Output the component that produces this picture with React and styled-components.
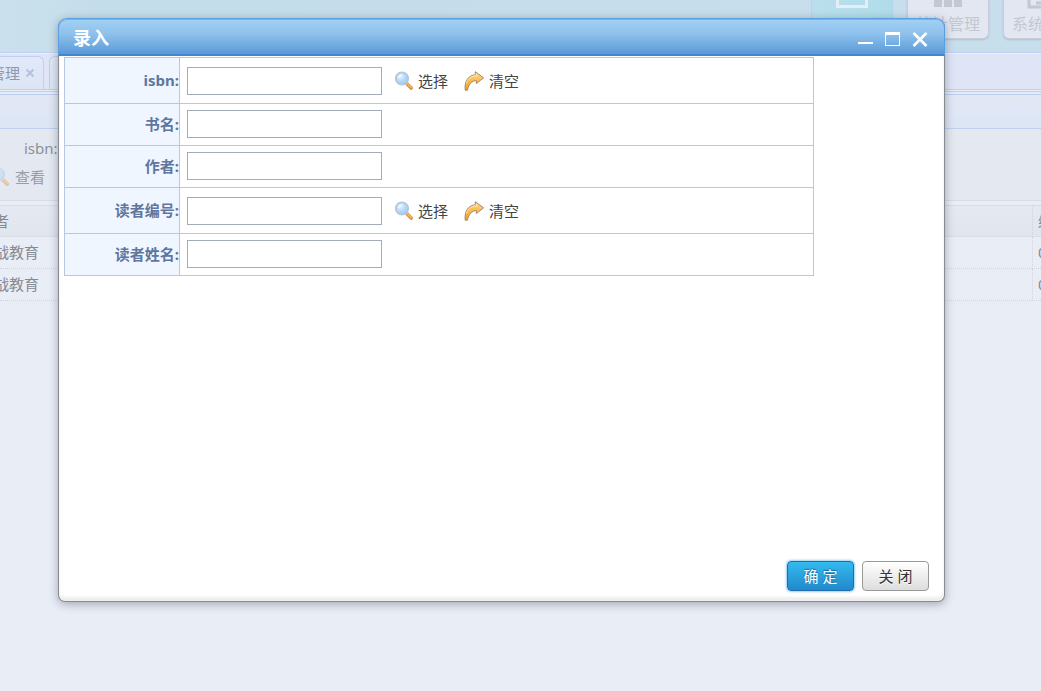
import React from 'react';
import styled, { createGlobalStyle } from 'styled-components';

const GlobalStyle = createGlobalStyle`
  * {
    box-sizing: border-box;
  }

  body {
    margin: 0;
    overflow: hidden;
    background: #e9edf6;
    color: #444;
    font-family: "Noto Sans", "Noto Sans CJK SC", sans-serif;
    font-size: 15px;
    line-height: 20px;
  }
`;

const Page = styled.div`
  position: relative;
  min-height: 100vh;
  overflow: hidden;
`;

const Header = styled.header`
  display: flex;
  justify-content: flex-end;
  gap: 14px;
  height: 52px;
  margin-right: -44px;
  background: linear-gradient(90deg, #cbe0ed, #c4ddea 10%, #c8deec);
`;

const NavTile = styled.a`
  display: flex;
  flex-direction: column;
  align-items: center;
  width: 82px;
  height: ${({ $active }) => ($active ? '52px' : '39px')};
  border: 1px solid ${({ $active }) => ($active ? '#b0d8e6' : '#c8cdd9')};
  border-top: 0;
  border-radius: ${({ $active }) => ($active ? '0' : '0 0 6px 6px')};
  background: ${({ $active }) => ($active ? 'linear-gradient(90deg, #b9dfec, #b0dcea)' : '#e2e7f1')};
  box-shadow: ${({ $active }) => ($active ? 'none' : '0 1px 2px #aebfce')};
  color: #c2c7d1;
  font-size: 16px;
  text-decoration: none;
  white-space: nowrap;

  svg {
    flex: none;
    margin-bottom: 5px;
  }
`;

const TabBar = styled.nav`
  display: flex;
  align-items: flex-end;
  gap: 5px;
  height: 38px;
  border-top: 1px solid #bfd0f0;
  border-bottom: 1px solid #c3cfe6;
  background: #dfe5f7;
  box-shadow: inset 0 1px #ebeffa;
`;

const Tab = styled.a`
  display: flex;
  align-items: center;
  gap: 5px;
  height: 33px;
  margin-left: ${({ $clipped }) => ($clipped ? '-51px' : '0')};
  padding: 0 8px 0 10px;
  border: 1px solid #bfd0f0;
  border-bottom: 0;
  border-radius: 6px 6px 0 0;
  background: linear-gradient(#e2e8f7, #dbe6f5);
  color: #8e99ad;
  text-decoration: none;
`;

const PanelTitle = styled.div`
  height: 35px;
  margin-top: 4px;
  border-top: 1px solid #b9cdf0;
  border-bottom: 1px solid #bfd0f0;
  background: linear-gradient(#e3e7f4, #dce6f6);
  box-shadow: 0 -2px #e6ecf6, 0 -3px #c3cfe6;
`;

const Search = styled.form`
  height: 72px;
  padding: 9px 0 0 24px;
  border-bottom: 1px solid #d7dce5;
  background: #e4e8f1;
  color: #8c919a;
`;

const SearchRow = styled.div`
  display: flex;
  align-items: center;
  gap: 8px;
  height: 20px;
`;

const SearchInput = styled.input`
  width: 150px;
  height: 20px;
  border: 1px solid #c5cad3;
`;

const ViewButton = styled.button`
  display: flex;
  align-items: center;
  gap: 5px;
  height: 20px;
  margin: 9px 0 0 -34px;
  padding: 0;
  border: 0;
  background: none;
  color: #989da6;
  font: inherit;

  svg {
    opacity: 0.45;
  }
`;

const Grid = styled.table`
  width: 100%;
  margin-top: 4px;
  border-collapse: separate;
  border-spacing: 0;
  table-layout: fixed;
  color: #858a93;

  th,
  td {
    height: 32px;
    padding: 0 0 2px;
    border-bottom: 1px dotted #cfd4dd;
    font-weight: normal;
    text-align: left;
    white-space: nowrap;
    overflow: hidden;
  }

  th {
    padding-bottom: 0;
    border-top: 1px solid #d7dce5;
    border-bottom: 1px solid #d7dce5;
    background: linear-gradient(#e5e9f2, #e1e5ee);
  }

  th:last-child,
  td:last-child {
    width: 9px;
    padding-left: 5px;
    border-left: 1px dotted #cfd4dd;
  }
`;

const Clipped = styled.span`
  display: block;
  margin-left: -21px;
`;

const Overlay = styled.div`
  position: absolute;
  inset: 0;
  padding: 18px 96px 89px 58px;
`;

const Dialog = styled.section`
  display: flex;
  flex-direction: column;
  height: 100%;
  border: 1px solid #888b8f;
  border-top: 0;
  border-radius: 9px 9px 7px 7px;
  background: #fff;
  box-shadow: 0 2px 10px rgba(50, 55, 75, 0.4), inset 0 -4px 3px #eee;
`;

const TitleBar = styled.header`
  display: flex;
  align-items: center;
  justify-content: space-between;
  height: 38px;
  margin: 0 -1px;
  padding: 2px 16px 0 14px;
  border: 1px solid #5a9fe0;
  border-bottom: 2px solid #4186cf;
  border-radius: 9px 9px 0 0;
  background: linear-gradient(#a3d1f5, #8cc0eb 45%, #5a99d8);
  box-shadow: inset 0 1px #78b3ec;
  color: #fff;
`;

const Title = styled.h1`
  margin: 0;
  font-size: 18px;
  line-height: 26px;
`;

const WindowButtons = styled.div`
  display: flex;
  gap: 12px;
  padding-top: 4px;
`;

const WindowButton = styled.button`
  display: flex;
  padding: 0;
  border: 0;
  background: none;
  color: #fff;
  cursor: pointer;
`;

const Body = styled.form`
  display: flex;
  flex: 1;
  flex-direction: column;
  justify-content: space-between;
  padding: 1px 15px 10px 5px;
`;

const FormTable = styled.table`
  width: 750px;
  max-width: 100%;
  border-collapse: collapse;
  table-layout: fixed;

  th,
  td {
    border: 1px solid #b4cae2;
  }

  th {
    width: 115px;
    padding: 0 0 2px;
    background: #f0f6ff;
    color: #5f779e;
    text-align: right;
  }

  td {
    padding: 0 0 0 7px;
  }
`;

const Field = styled.div`
  display: flex;
  align-items: center;
  height: ${({ $tall }) => ($tall ? '45px' : '41px')};
  padding-bottom: ${({ $tall }) => ($tall ? '0' : '1px')};
`;

const TextInput = styled.input`
  width: 195px;
  height: 28px;
  margin-right: 12px;
  padding: 0 5px;
  border: 1px solid #a3acb8;
  background: #fff;
  font: inherit;
`;

const IconButton = styled.button`
  display: flex;
  align-items: center;
  gap: 4px;
  margin-right: 16px;
  padding: 0;
  border: 0;
  background: none;
  color: #444;
  font: inherit;
  cursor: pointer;
`;

const Footer = styled.footer`
  display: flex;
  justify-content: flex-end;
  gap: 8px;
`;

const Button = styled.button`
  width: 67px;
  height: 30px;
  padding: 0;
  border: 1px solid ${({ $primary }) => ($primary ? '#1c6fae' : '#999')};
  border-radius: 4px;
  background: ${({ $primary }) => ($primary ? 'linear-gradient(#33bbee, #2288cc)' : 'linear-gradient(#fff, #ddd)')};
  box-shadow: ${({ $primary }) => ($primary ? '0 0 3px #3399dd' : 'none')};
  color: ${({ $primary }) => ($primary ? '#fff' : '#333')};
  font: inherit;
  text-shadow: ${({ $primary }) => ($primary ? '0 -1px 1px #1c6a9e' : '0 1px 1px #fff')};
  cursor: pointer;
`;

const SearchIcon = () => (
  <svg width="20" height="20" viewBox="0 0 20 20">
    <defs>
      <radialGradient id="glass" cx="0.35" cy="0.3" r="0.8">
        <stop offset="0" stopColor="#e8f6ff" />
        <stop offset="0.5" stopColor="#b5dafc" />
        <stop offset="1" stopColor="#8fc8fa" />
      </radialGradient>
    </defs>
    <path d="M13 12.8l4.2 4.2" stroke="#c98a4a" strokeWidth="3.6" strokeLinecap="round" />
    <path d="M13.5 12.9l3.8 3.6" stroke="#f9b04e" strokeWidth="2.2" strokeLinecap="round" />
    <circle cx="8" cy="7.5" r="6.2" fill="url(#glass)" stroke="#b9c6d6" strokeWidth="1.8" />
    <path d="M4.5 7a3.8 3.8 0 0 1 3.5-3" fill="none" stroke="#fff" strokeWidth="1" opacity="0.8" />
  </svg>
);

const ClearIcon = () => (
  <svg width="21" height="20" viewBox="0 0 21 20">
    <defs>
      <linearGradient id="arrow" x1="0" y1="0" x2="0" y2="1">
        <stop offset="0" stopColor="#ffe09a" />
        <stop offset="0.4" stopColor="#fbc058" />
        <stop offset="1" stopColor="#f59a1a" />
      </linearGradient>
    </defs>
    <path
      d="M11.3 0.7L19.6 6.8L12.4 12.6V9.6C8 9.8 4.8 12.5 3.4 19.2H1.2C0.2 10 4.6 4.2 11.3 3.8Z"
      fill="url(#arrow)"
      stroke="#a08c70"
      strokeLinejoin="round"
    />
    <path d="M12.4 2.8V4.8C7.6 4.8 3.8 7.6 2.4 12.5" fill="none" stroke="#fff0c8" opacity="0.8" />
  </svg>
);

const fields = [
  { id: 'isbn', label: 'isbn:', picker: true },
  { id: 'bookName', label: '书名:' },
  { id: 'author', label: '作者:' },
  { id: 'readerNo', label: '读者编号:', picker: true },
  { id: 'readerName', label: '读者姓名:' },
];

const Background = () => (
  <>
    <Header>
      <NavTile $active href="#books" aria-label="图书">
        <svg width="34" height="10" viewBox="0 0 34 10">
          <path d="M2.5 0V6.5H31.5V0" fill="none" stroke="#e5edf6" strokeWidth="3" />
        </svg>
      </NavTile>
      <NavTile href="#stats">
        <svg width="30" height="9" viewBox="0 0 30 9">
          <path d="M1 0h8v7H1zM11 0h8v7h-8zM21 0h8v7h-8z" fill="#c2c7d1" />
        </svg>
        统计管理
      </NavTile>
      <NavTile href="#system">
        <svg width="34" height="9" viewBox="0 0 34 9">
          <path d="M2 0v7h30V0M9 3h15" fill="none" stroke="#c2c7d1" strokeWidth="3" />
        </svg>
        系统管理
      </NavTile>
    </Header>
    <TabBar>
      <Tab $clipped href="#tab-manage">
        图书管理
        <svg width="10" height="10" viewBox="0 0 10 10">
          <path d="M1.5 1.5l7 7M8.5 1.5l-7 7" stroke="#b4c2dc" strokeWidth="2" />
        </svg>
      </Tab>
      <Tab href="#tab-borrow">借阅管理</Tab>
    </TabBar>
    <PanelTitle />
    <Search>
      <SearchRow>
        <label htmlFor="searchIsbn">isbn:</label>
        <SearchInput id="searchIsbn" />
      </SearchRow>
      <ViewButton type="button">
        <SearchIcon />
        查看
      </ViewButton>
    </Search>
    <Grid>
      <thead>
        <tr>
          <th><Clipped>作者</Clipped></th>
          <th>编号</th>
        </tr>
      </thead>
      <tbody>
        {[1, 2].map((row) => (
          <tr key={row}>
            <td><Clipped>实战教育</Clipped></td>
            <td>001</td>
          </tr>
        ))}
      </tbody>
    </Grid>
  </>
);

const App = () => (
  <>
    <GlobalStyle />
    <Page>
      <Background />
      <Overlay>
        <Dialog role="dialog" aria-labelledby="dialogTitle">
          <TitleBar>
            <Title id="dialogTitle">录入</Title>
            <WindowButtons>
              <WindowButton type="button" aria-label="最小化">
                <svg width="15" height="15" viewBox="0 0 15 15">
                  <path d="M0 10h15v2H0z" fill="currentColor" />
                </svg>
              </WindowButton>
              <WindowButton type="button" aria-label="最大化">
                <svg width="15" height="15" viewBox="0 0 15 15">
                  <path d="M0 0h15v14H0zM1 3v10h13V3z" fill="currentColor" fillRule="evenodd" />
                </svg>
              </WindowButton>
              <WindowButton type="button" aria-label="关闭窗口">
                <svg width="16" height="15" viewBox="0 0 16 15">
                  <path d="M1.5 1l13 13M14.5 1l-13 13" stroke="currentColor" strokeWidth="2.6" />
                </svg>
              </WindowButton>
            </WindowButtons>
          </TitleBar>
          <Body onSubmit={(e) => e.preventDefault()}>
            <FormTable>
              <tbody>
                {fields.map(({ id, label, picker }) => (
                  <tr key={id}>
                    <th scope="row">
                      <label htmlFor={id}>{label}</label>
                    </th>
                    <td>
                      <Field $tall={picker}>
                        <TextInput id={id} type="text" />
                        {picker && (
                          <>
                            <IconButton type="button">
                              <SearchIcon />
                              选择
                            </IconButton>
                            <IconButton type="button">
                              <ClearIcon />
                              清空
                            </IconButton>
                          </>
                        )}
                      </Field>
                    </td>
                  </tr>
                ))}
              </tbody>
            </FormTable>
            <Footer>
              <Button $primary type="submit">确 定</Button>
              <Button type="button">关 闭</Button>
            </Footer>
          </Body>
        </Dialog>
      </Overlay>
    </Page>
  </>
);

export default App;
